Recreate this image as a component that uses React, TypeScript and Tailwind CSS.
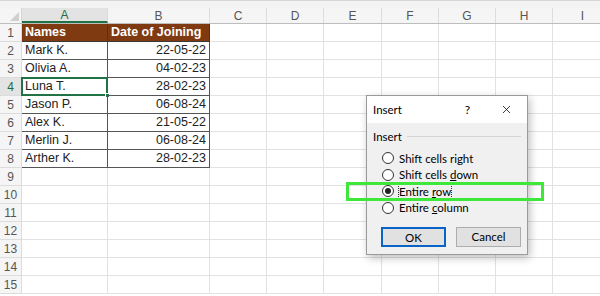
import { X } from "lucide-react";

const cols = [
  { name: "A", w: 86 },
  { name: "B", w: 102 },
  { name: "C", w: 57 },
  { name: "D", w: 57 },
  { name: "E", w: 58 },
  { name: "F", w: 57 },
  { name: "G", w: 57 },
  { name: "H", w: 57 },
  { name: "I", w: 60 },
];

const data: [string, string][] = [
  ["Mark K.", "22-05-22"],
  ["Olivia A.", "04-02-23"],
  ["Luna T.", "28-02-23"],
  ["Jason P.", "06-08-24"],
  ["Alex K.", "21-05-22"],
  ["Merlin J.", "06-08-24"],
  ["Arther K.", "28-02-23"],
];

const options = [
  { label: "Shift cells right", key: "", rest: "", checked: false },
  { label: "Shift cells ", key: "d", rest: "own", checked: false },
  { label: "Entire ", key: "r", rest: "ow", checked: true },
  { label: "Entire ", key: "c", rest: "olumn", checked: false },
];

function Radio({ checked }: { checked: boolean }) {
  return (
    <span className="flex h-[12px] w-[12px] shrink-0 items-center justify-center rounded-full border border-[#333] bg-white">
      {checked && <span className="h-[6px] w-[6px] rounded-full bg-[#222]" />}
    </span>
  );
}

export default function App() {
  const rows = Array.from({ length: 15 }, (_, i) => i + 1);
  return (
    <div className="relative h-[296px] w-[600px] overflow-hidden bg-white font-['Liberation_Sans',sans-serif] text-[12.5px] text-[#222]">
      <div className="h-[8px] border-t border-[#d6d6d6] bg-[#f3f3f3]" />
      <div className="flex h-[16px] border-b border-[#bdbdbd] bg-[#f5f5f5]">
        <div className="relative w-[22px] shrink-0 border-r border-[#d6d6d6]">
          <span className="absolute bottom-[2px] right-[2px] h-0 w-0 border-b-[9px] border-l-[9px] border-b-[#cfcfcf] border-l-transparent" />
        </div>
        {cols.map((c) => (
          <div
            key={c.name}
            style={{ width: c.w }}
            className={`flex shrink-0 items-center justify-center border-r border-[#dcdcdc] text-[12px] ${
              c.name === "A" ? "border-b-2 border-b-[#217346] bg-[#e3e3e3] text-[#1e6b3f]" : "text-[#555]"
            }`}
          >
            {c.name}
          </div>
        ))}
      </div>
      {rows.map((r) => (
        <div key={r} className="flex h-[18px]">
          <div
            className={`flex w-[22px] shrink-0 items-center justify-center border-b border-r border-[#dcdcdc] text-[12px] ${
              r === 4 ? "bg-[#e3e3e3] text-[#1e6b3f]" : "bg-[#f5f5f5] text-[#555]"
            }`}
          >
            {r}
          </div>
          {cols.map((c, ci) => {
            let content: React.ReactNode = null;
            let cls = "border-b border-r border-[#e2e2e2]";
            if (r === 1 && ci < 2) {
              cls = "border-b border-r border-[#3a3a3a] bg-[#7f3a12] font-bold text-white";
              content = ci === 0 ? "Names" : "Date of Joining";
            } else if (r >= 2 && r <= 8 && ci < 2) {
              cls = "border-b border-r border-[#555]";
              content = data[r - 2][ci];
            }
            return (
              <div
                key={c.name}
                style={{ width: c.w }}
                className={`relative flex shrink-0 items-center overflow-visible whitespace-nowrap px-[3px] ${
                  ci === 1 && r > 1 && r <= 8 ? "justify-end" : ""
                } ${cls}`}
              >
                {content}
                {r === 4 && ci === 0 && (
                  <>
                    <span className="absolute -left-[1px] -top-[1px] h-[19px] w-[87px] border-2 border-[#217346]" />
                    <span className="absolute -bottom-[3px] -right-[3px] h-[5px] w-[5px] border border-white bg-[#217346]" />
                  </>
                )}
              </div>
            );
          })}
        </div>
      ))}

      {/* Insert dialog */}
      <div className="absolute left-[366px] top-[95px] w-[162px] border border-[#9a9a9a] bg-[#f0f0f0] font-['Lato',sans-serif] text-[11.5px] text-black shadow-[2px_3px_8px_rgba(0,0,0,0.25)]">
        <div className="flex h-[27px] items-center bg-white pl-[6px] pr-[14px]">
          <span className="flex-1">Insert</span>
          <span className="mr-[30px] text-[12px]">?</span>
          <X size={13} strokeWidth={1.4} />
        </div>
        <div className="px-[6px] pb-[7px] pt-[5px]">
          <div className="flex items-center gap-[5px]">
            <span>Insert</span>
            <span className="h-px flex-1 bg-[#d4d4d4]" />
          </div>
          <div className="mt-[6px] flex flex-col gap-[2.5px] pl-[9px]">
            {options.map((o, i) => (
              <div key={i} className="flex h-[14px] items-center gap-[5px]">
                <Radio checked={o.checked} />
                <span className={o.checked ? "outline outline-1 outline-dotted outline-[#333]" : ""}>
                  {o.label}
                  {o.key && <span className="underline">{o.key}</span>}
                  {o.rest}
                </span>
              </div>
            ))}
          </div>
          <div className="mt-[12px] flex gap-[10px] pl-[8px]">
            <button className="h-[20px] w-[65px] border-2 border-[#0a64c8] bg-[#e1e1e1] text-[11.5px]">OK</button>
            <button className="h-[20px] w-[65px] border border-[#adadad] bg-[#e1e1e1] text-[11.5px]">Cancel</button>
          </div>
        </div>
      </div>

      {/* highlight */}
      <div className="absolute left-[346px] top-[182px] h-[19px] w-[198px] border-[3px] border-[#3de83a]" />
    </div>
  );
}
